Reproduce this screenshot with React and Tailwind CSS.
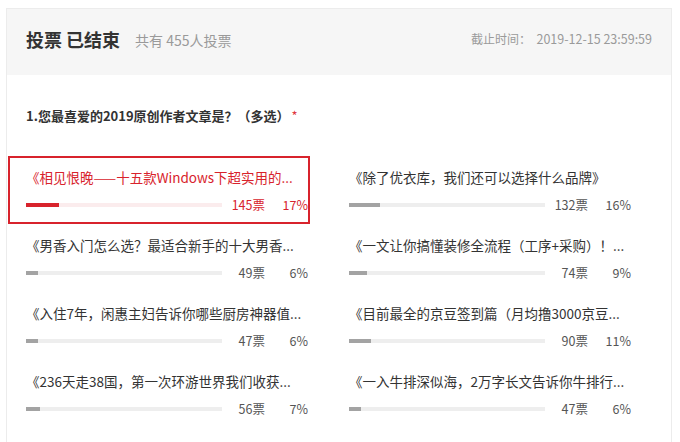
import React from "react";

const options = [
  { t: "《相见恨晚——十五款Windows下超实用的...", v: 145, p: 17, hi: true },
  { t: "《除了优衣库，我们还可以选择什么品牌》", v: 132, p: 16 },
  { t: "《男香入门怎么选？最适合新手的十大男香...", v: 49, p: 6 },
  { t: "《一文让你搞懂装修全流程（工序+采购）！...", v: 74, p: 9 },
  { t: "《入住7年，闲惠主妇告诉你哪些厨房神器值...", v: 47, p: 6 },
  { t: "《目前最全的京豆签到篇（月均撸3000京豆...", v: 90, p: 11 },
  { t: "《236天走38国，第一次环游世界我们收获...", v: 56, p: 7 },
  { t: "《一入牛排深似海，2万字长文告诉你牛排行...", v: 47, p: 6 },
  { t: "《家用投影仪怎么选？看完这篇就够了...", v: 40, p: 5 },
  { t: "《2019年度好物清单，这些东西真的值得买...", v: 38, p: 5 },
];

function Option({ o }) {
  return (
    <div
      className={
        "h-[68px] border-2 pt-[9px] pl-[16px] " +
        (o.hi ? "border-[#d8232c]" : "border-transparent")
      }
    >
      <div
        className={
          "h-[20px] leading-[20px] text-[13.5px] whitespace-nowrap overflow-hidden " +
          (o.hi ? "text-[#d8232c]" : "text-[#333333]")
        }
      >
        {o.t}
      </div>
      <div className="mt-[9px] flex items-center h-[18px] text-[12.5px] leading-[18px]">
        <div
          className={
            "w-[196px] h-[4px] " + (o.hi ? "bg-[#fbeced]" : "bg-[#eeeeee]")
          }
        >
          <div
            className={"h-full " + (o.hi ? "bg-[#d8232c]" : "bg-[#a3a3a3]")}
            style={{ width: `${o.p}%` }}
          />
        </div>
        <div
          className={
            "w-[43px] text-right " + (o.hi ? "text-[#d8232c]" : "text-[#555555]")
          }
        >
          {o.v}票
        </div>
        <div
          className={
            "w-[43px] text-right " + (o.hi ? "text-[#d8232c]" : "text-[#555555]")
          }
        >
          {o.p}%
        </div>
      </div>
    </div>
  );
}

export default function App() {
  return (
    <div
      className="w-[680px] h-[442px] overflow-hidden bg-white pt-[8px] pl-[6px]"
      style={{ fontFamily: '"Noto Sans CJK SC", "Noto Sans", sans-serif' }}
    >
      <div className="w-[666px] border border-[#ececec] bg-white">
        <div className="h-[66px] bg-[#f6f6f6] flex items-center pl-[19px] pr-[19px] pb-[6px]">
          <div className="text-[18px] font-bold text-[#333333] leading-none">
            投票 已结束
          </div>
          <div className="ml-[15px] text-[14px] text-[#9a9a9a] leading-none mt-[2px]">
            共有 455人投票
          </div>
          <div className="ml-auto text-[12px] text-[#9a9a9a] leading-none">
            截止时间：&nbsp;&nbsp;<span className="text-[12.5px]">2019-12-15 23:59:59</span>
          </div>
        </div>
        <div className="pt-[31px]">
          <div className="pl-[19px] h-[20px] leading-[20px] text-[13px] font-bold text-[#333333]">
            1.您最喜爱的2019原创作者文章是？（多选）
            <span className="text-[#e0383e] ml-[2px] font-normal">*</span>
          </div>
          <div className="mt-[30px] pl-[1px] grid grid-cols-[302px_302px] gap-x-[21px]">
            {options.map((o, i) => (
              <Option key={i} o={o} />
            ))}
          </div>
        </div>
      </div>
    </div>
  );
}
